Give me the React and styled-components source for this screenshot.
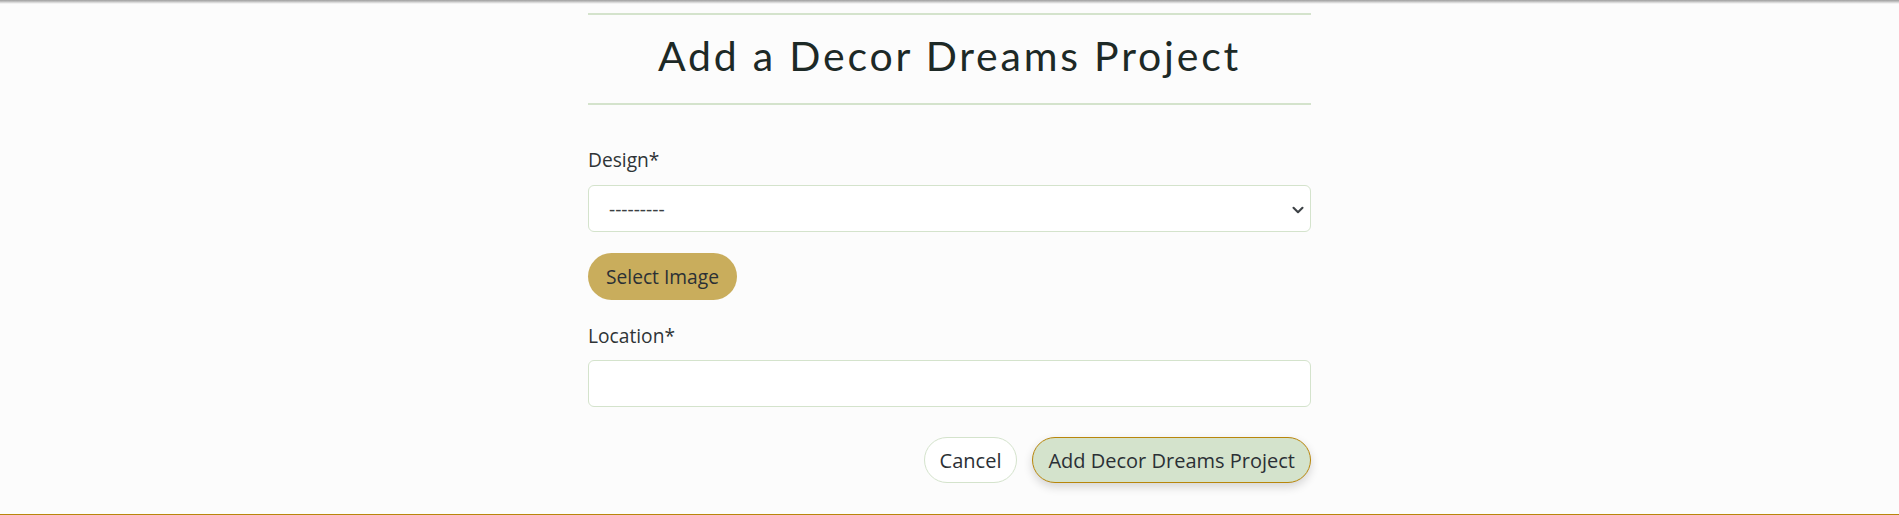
import React from "react";
import styled, { createGlobalStyle } from "styled-components";
import { ChevronDown } from "lucide-react";

const GlobalStyle = createGlobalStyle`
    html, body {
        margin: 0;
        padding: 0;
        background: #fcfcfc;
        font-family: "Open Sans", "Noto Sans", sans-serif;
        color: #2f3436;
    }
    * {
        box-sizing: border-box;
    }
`;

const NavShadow = styled.div`
    height: 4px;
    background: linear-gradient(to bottom, #9e9e9e, #bdbdbd 35%, #e2e2e2 70%, #fcfcfc);
`;

const Main = styled.main`
    width: 723px;
    margin: 0 auto;
    padding-top: 9px;
`;

const Divider = styled.hr`
    margin: 0;
    border: none;
    border-top: 2px solid #d4e3cc;
`;

const Title = styled.h1`
    margin: 16px 0 23px;
    font-family: "Lato", sans-serif;
    font-weight: 400;
    font-size: 41px;
    line-height: 49px;
    letter-spacing: 2.8px;
    text-align: center;
    color: #1d2926;
`;

const Form = styled.form`
    display: flex;
    flex-direction: column;
    padding-top: 40px;
`;

const Label = styled.label`
    font-size: 19.2px;
    line-height: 29px;
    margin-bottom: ${(props) => props.gap || 11}px;
`;

const SelectWrap = styled.div`
    position: relative;
`;

const Select = styled.select`
    display: block;
    height: 47px;
    width: 100%;
    padding: 0 30px 0 20px;
    font-family: inherit;
    font-size: 19.2px;
    color: #3b3f42;
    background: #fff;
    border: 1px solid #d4e3cc;
    border-radius: 6px;
    outline: none;
    appearance: none;
`;

const Caret = styled(ChevronDown)`
    position: absolute;
    right: 4px;
    top: 15.5px;
    color: #3d4246;
    pointer-events: none;
`;

const Input = styled.input`
    display: block;
    height: 47px;
    width: 100%;
    padding: 0 20px;
    font-family: inherit;
    font-size: 19.2px;
    background: #fff;
    border: 1px solid #d4e3cc;
    border-radius: 6px;
    outline: none;
`;

const Pill = styled.button`
    height: ${(props) => props.h || 46}px;
    padding: 0 ${(props) => props.px || 15}px;
    font-family: inherit;
    font-size: ${(props) => props.fs || 20}px;
    color: #2b3035;
    border-radius: 999px;
    cursor: pointer;
`;

const ImageButton = styled(Pill)`
    align-self: flex-start;
    margin: 21px 0 21px;
    background: #c9ad5c;
    border: none;
`;

const CancelButton = styled(Pill)`
    background: #fff;
    border: 1px solid #d4e3cc;
`;

const SubmitButton = styled(Pill)`
    background: #d4e3cc;
    border: 1px solid #b8860b;
    box-shadow: 0 4px 10px rgba(0, 0, 0, 0.16);
`;

const Actions = styled.div`
    display: flex;
    justify-content: flex-end;
    gap: 15px;
    margin-top: 30px;
`;

const Footer = styled.footer`
    margin-top: 31px;
    height: 40px;
    border-top: 1px solid #b8860b;
`;

const App = () => {
    return (
        <>
            <GlobalStyle />
            <NavShadow />
            <Main>
                <Divider />
                <Title>Add a Decor Dreams Project</Title>
                <Divider />
                <Form onSubmit={(e) => e.preventDefault()}>
                    <Label htmlFor="design">Design*</Label>
                    <SelectWrap>
                        <Select id="design" defaultValue="">
                            <option value="">---------</option>
                        </Select>
                        <Caret size={18} strokeWidth={2.8} />
                    </SelectWrap>
                    <ImageButton type="button" h={47} px={18} fs={19.2}>Select Image</ImageButton>
                    <Label htmlFor="location" gap={10}>Location*</Label>
                    <Input id="location" type="text" />
                    <Actions>
                        <CancelButton type="button">Cancel</CancelButton>
                        <SubmitButton type="submit">Add Decor Dreams Project</SubmitButton>
                    </Actions>
                </Form>
            </Main>
            <Footer />
        </>
    );
};

export default App;
